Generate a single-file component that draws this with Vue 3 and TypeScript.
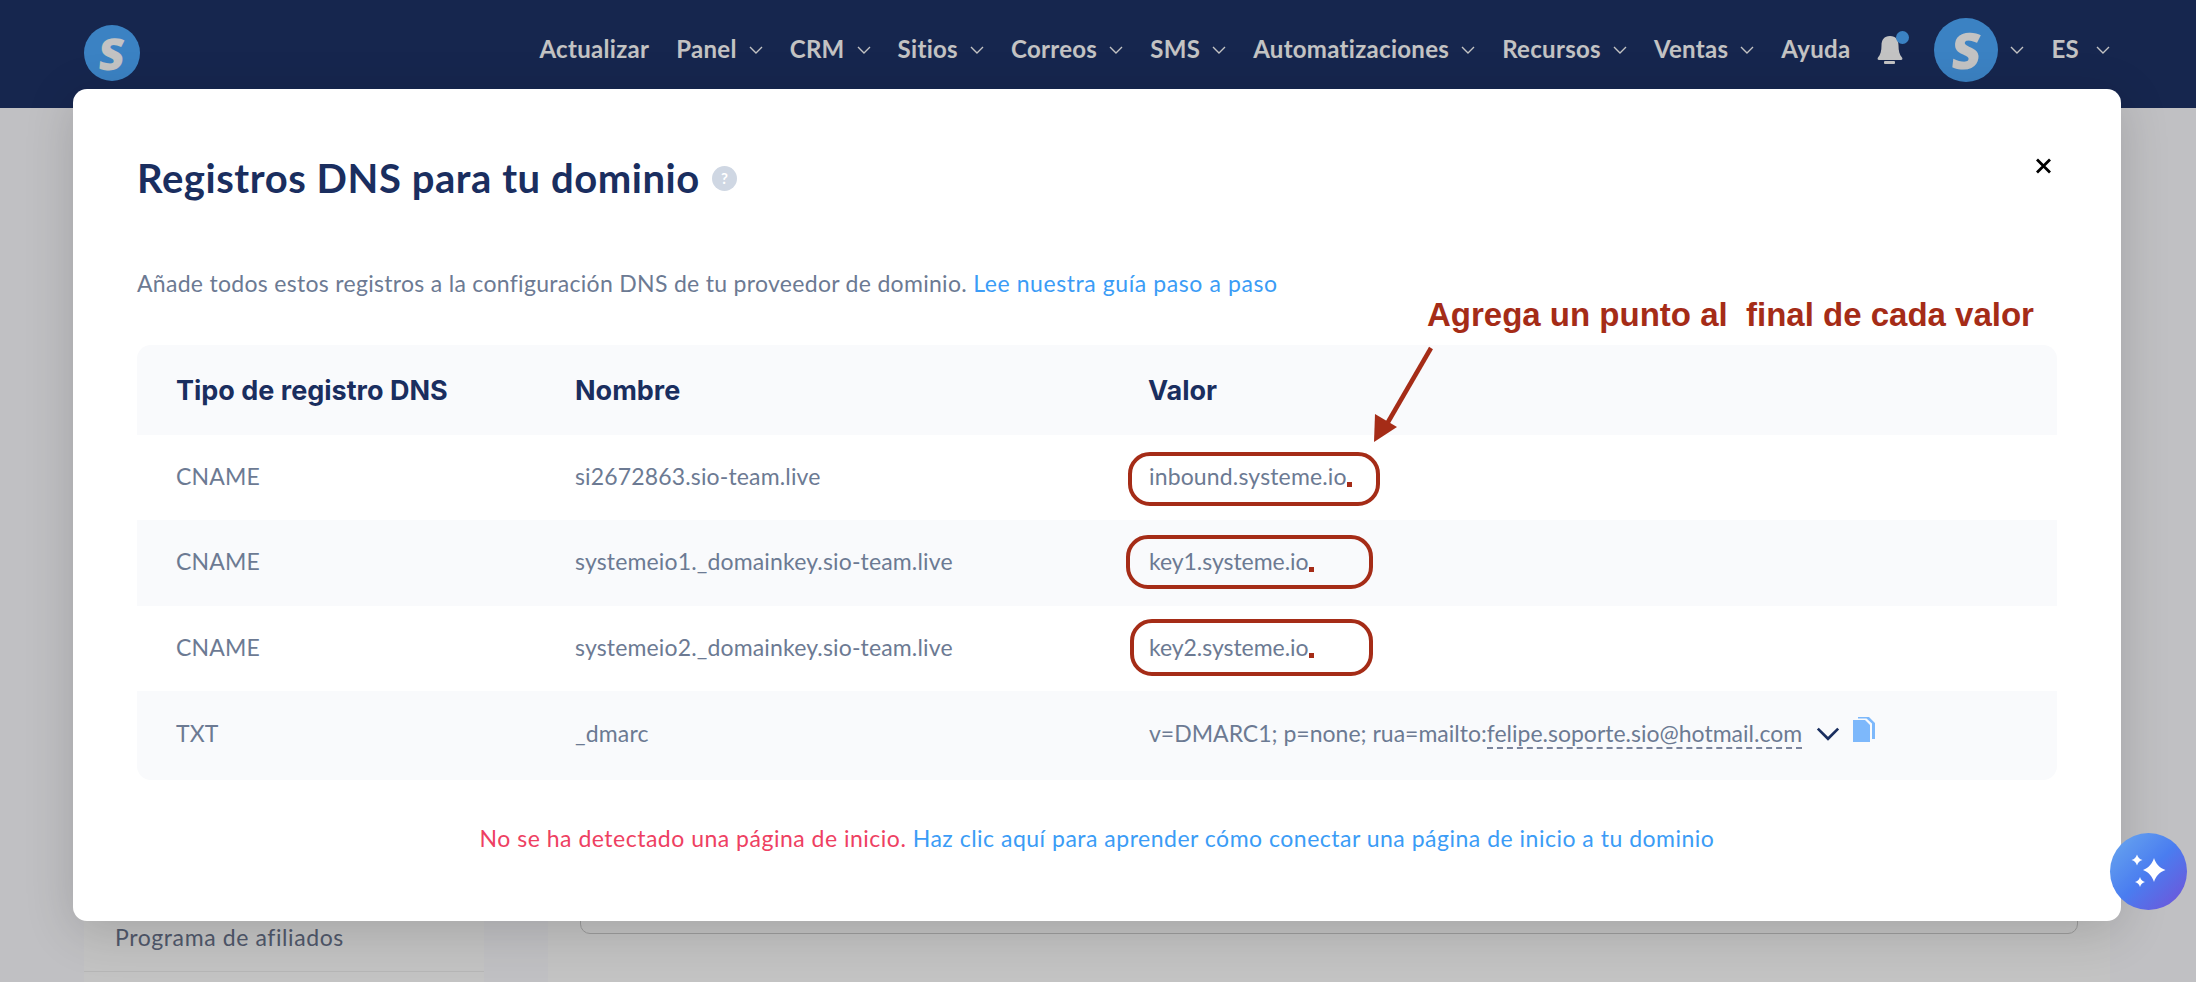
<script setup lang="ts">
// data
const navItems = [
  { label: 'Actualizar', caret: false },
  { label: 'Panel', caret: true },
  { label: 'CRM', caret: true },
  { label: 'Sitios', caret: true },
  { label: 'Correos', caret: true },
  { label: 'SMS', caret: true },
  { label: 'Automatizaciones', caret: true },
  { label: 'Recursos', caret: true },
  { label: 'Ventas', caret: true },
  { label: 'Ayuda', caret: false },
];

const records = [
  { type: 'CNAME', name: 'si2672863.sio-team.live', value: 'inbound.systeme.io', ring: 'ring-a' },
  { type: 'CNAME', name: 'systemeio1._domainkey.sio-team.live', value: 'key1.systeme.io', ring: 'ring-b' },
  { type: 'CNAME', name: 'systemeio2._domainkey.sio-team.live', value: 'key2.systeme.io', ring: 'ring-c' },
];

const noteText = 'Agrega un punto al  final de cada valor';
</script>

<template>
  <div class="page">
    <header class="navbar">
      <div class="logo"><span>S</span></div>
      <nav class="nav">
        <div v-for="item in navItems" :key="item.label" class="nav-item">
          <span>{{ item.label }}</span>
          <svg v-if="item.caret" class="caret" viewBox="0 0 14 8"><path d="M1 1l6 6 6-6" /></svg>
        </div>
        <div class="bell">
          <svg viewBox="0 0 32 34" width="32" height="34">
            <path d="M13 5c-6 0-8.500 4-8.500 9.500 0 5.500-1 9-3.500 12-.8 1 -.4 2.500 1 2.500h22c1.400 0 1.800-1.500 1-2.500-2.500-3-3.500-6.500-3.500-12C21.500 9 19 5 13 5z" fill="#fff" />
            <rect x="7" y="30" width="11" height="3" rx="1" fill="#fff" />
            <circle cx="25.500" cy="6.500" r="6.500" fill="#4eabff" />
          </svg>
        </div>
        <div class="avatar"><span>S</span></div>
        <svg class="caret avatar-caret" viewBox="0 0 14 8"><path d="M1 1l6 6 6-6" /></svg>
        <div class="nav-item lang">
          <span>ES</span>
          <svg class="caret" viewBox="0 0 14 8"><path d="M1 1l6 6 6-6" /></svg>
        </div>
      </nav>
    </header>

    <div class="content">
      <aside class="sidebar">
        <div class="side-link">Programa de afiliados</div>
      </aside>
      <main class="main">
        <div class="field"></div>
      </main>
    </div>

    <div class="backdrop"></div>

    <section class="modal">
      <div class="modal-head">
        <h1 class="title">Registros DNS para tu dominio</h1>
        <span class="help">?</span>
        <svg class="close" viewBox="0 0 17 16"><path d="M2 1.500l13 13M15 1.500l-13 13" /></svg>
      </div>
      <p class="desc">
        Añade todos estos registros a la configuración DNS de tu proveedor de dominio.
        <span class="link">Lee nuestra guía paso a paso</span>
      </p>

      <div class="table">
        <div class="row head">
          <div>Tipo de registro DNS</div>
          <div>Nombre</div>
          <div>Valor</div>
        </div>
        <div v-for="rec in records" :key="rec.name" class="row">
          <div>{{ rec.type }}</div>
          <div>{{ rec.name }}</div>
          <div class="value">
            <span class="value-text" :class="'text-' + rec.ring">{{ rec.value }}<i class="dot"></i><i class="ring" :class="rec.ring"></i></span>
          </div>
        </div>
        <div class="row txt">
          <div>TXT</div>
          <div>_dmarc</div>
          <div class="dmarc">
            <span>v=DMARC1; p=none; rua=mailto:<span class="dashed">felipe.soporte.sio@hotmail.com</span></span>
            <svg class="more" viewBox="0 0 22 14"><path d="M1.500 1.500L11 11l9.500-9.500" /></svg>
            <svg class="copy" viewBox="0 0 22 25" width="22" height="25">
              <path d="M5 0h11l6 6v16h-3V6.500L13.500 1.500H5z" fill="#7db8fb" />
              <path d="M0 3h12l5 5v17H0z" fill="#7db8fb" />
            </svg>
          </div>
        </div>
      </div>

      <p class="foot">
        <span class="warn">No se ha detectado una página de inicio.</span>
        {{ ' ' }}
        <span class="link">Haz clic aquí para aprender cómo conectar una página de inicio a tu dominio</span>
      </p>

      <div class="note">{{ noteText }}</div>
      <svg class="arrow" viewBox="0 0 70 100" width="70" height="100">
        <path d="M60 3L13 84" stroke="#a52c17" stroke-width="4.500" fill="none" />
        <path d="M3 97L4 69 26 82z" fill="#a52c17" />
      </svg>
    </section>

    <button class="assistant">
      <svg viewBox="0 0 77 77" width="77" height="77">
        <path d="M44 25c2 6 5 9.500 11.500 12C49 39.500 46 43 44 49c-2-6-5-9.500-11-12 6-2.500 9-6 11-12z" fill="#fff" />
        <path d="M27 21.500c1 3 2.300 4.500 5.500 5.500-3.200 1-4.500 2.500-5.500 5.500-1-3-2.300-4.500-5.500-5.500 3.200-1 4.500-2.500 5.500-5.500z" fill="#fff" />
        <path d="M30 44c1 3 2.200 4 5 5-2.800 1-4 2-5 5-1-3-2.200-4-5-5 2.800-1 4-2 5-5z" fill="#fff" />
      </svg>
    </button>
  </div>
</template>

<style>
html,
body {
  margin: 0;
  background: #fff;
}
</style>

<style scoped>
.page {
  position: relative;
  width: 2196px;
  height: 982px;
  overflow: hidden;
  background: #fbfcff;
  font-family: Lato, 'Noto Sans', sans-serif;
}

/* navbar */
.navbar {
  height: 108px;
  background: #1d3267;
  display: flex;
  align-items: center;
  justify-content: space-between;
  padding: 0 86px 0 84px;
}
.logo {
  width: 56px;
  height: 56px;
  margin-top: -2px;
  border-radius: 50%;
  background: #4eabff;
  display: flex;
  align-items: center;
  justify-content: center;
  color: #fff;
  font: 800 44px 'Open Sans', sans-serif;
}
.logo span,
.avatar span {
  display: block;
  transform: skewX(-6deg);
}
.nav {
  display: flex;
  align-items: center;
  margin-bottom: 12px;
  color: #fff;
  font-size: 24px;
  letter-spacing: 0.3px;
  font-weight: 700;
  gap: 27px;
}
.nav-item {
  display: flex;
  align-items: center;
  gap: 12px;
}
.lang {
  gap: 17px;
}
.caret {
  width: 14px;
  height: 8px;
  margin-top: 3px;
  fill: none;
  stroke: #fff;
  stroke-width: 1.400;
}
.bell {
  display: flex;
  width: 32px;
  height: 34px;
}
.avatar {
  width: 64px;
  height: 64px;
  margin: 4px 0 0 -2px;
  border-radius: 50%;
  background: #4eabff;
  display: flex;
  align-items: center;
  justify-content: center;
  font: 800 50px 'Open Sans', sans-serif;
}
.avatar-caret {
  margin-left: -15px;
}

/* page behind the modal */
.content {
  display: flex;
  height: 874px;
  padding-left: 84px;
  gap: 64px;
}
.sidebar {
  width: 400px;
  background: #fff;
  display: flex;
  flex-direction: column;
  justify-content: flex-end;
}
.side-link {
  padding: 5px 31px 4px;
  height: 50px;
  line-height: 40px;
  font-size: 23px;
  letter-spacing: 0.6px;
  color: #69738c;
  border-bottom: 1px solid #eee;
  margin-bottom: 10px;
}
.main {
  width: 1562px;
  background: #fff;
  padding: 0 32px;
  box-sizing: border-box;
}
.field {
  height: 824px;
  border: 1px solid #ccc;
  border-radius: 10px;
}
.backdrop {
  position: absolute;
  inset: 0;
  background: rgba(0, 0, 0, 0.235);
}

/* modal */
.modal {
  position: absolute;
  left: 73px;
  top: 89px;
  width: 2048px;
  height: 832px;
  box-sizing: border-box;
  padding: 0 64px;
  background: #fff;
  border-radius: 14px;
  box-shadow: 0 10px 50px rgba(0, 0, 0, 0.16);
}
.modal-head {
  position: relative;
  display: flex;
  align-items: center;
  gap: 12px;
  height: 178px;
}
.title {
  margin: 0;
  font-size: 40px;
  letter-spacing: 0.55px;
  font-weight: 700;
  color: #1a2e5f;
}
.help {
  width: 25px;
  height: 25px;
  border-radius: 50%;
  background: #cfd7e3;
  color: #fff;
  font-size: 15px;
  font-weight: 700;
  text-align: center;
  line-height: 25px;
}
.close {
  position: absolute;
  right: 5px;
  top: 69px;
  width: 17px;
  height: 16px;
  fill: none;
  stroke: #000;
  stroke-width: 2.800;
}
.desc {
  margin: 0;
  height: 78px;
  padding-top: 1px;
  box-sizing: border-box;
  line-height: 30px;
  font-size: 23px;
  letter-spacing: 0.3px;
  color: #6c7a93;
}
.desc .link {
  letter-spacing: 0.58px;
}
.link {
  color: #3b9cf6;
}

.table {
  width: 1920px;
  border-radius: 14px;
  overflow: hidden;
  font-size: 23px;
  letter-spacing: 0.15px;
  color: #6c7a93;
}
.row {
  display: grid;
  grid-template-columns: 399px 573px 1fr;
  align-items: center;
  box-sizing: border-box;
  height: 85.330px;
  padding: 0 0 3px 39px;
}
.row:nth-child(odd) {
  background: #f9fafc;
}
.row.head {
  height: 90px;
  padding-bottom: 0;
  font-family: Inter, sans-serif;
  font-size: 27px;
  letter-spacing: 0;
  font-weight: 700;
  color: #1a2e5f;
}
.row.txt {
  height: 89px;
  padding-bottom: 5px;
}
.value-text {
  position: relative;
  display: inline-block;
  margin-left: 1px;
}
.text-ring-b,
.text-ring-c {
  letter-spacing: -0.05px;
}
.dot {
  position: absolute;
  left: 100%;
  bottom: 3px;
  width: 5px;
  height: 5px;
  background: #a52c17;
}
.ring {
  position: absolute;
  box-sizing: border-box;
  border: 4.500px solid #a52c17;
  border-radius: 22px;
}
.ring-a {
  left: -21px;
  right: -33px;
  top: -10px;
  bottom: -16px;
}
.ring-b {
  left: -23px;
  right: -64px;
  top: -12.500px;
  bottom: -13.500px;
}
.ring-c {
  left: -19px;
  right: -64px;
  top: -14px;
  bottom: -15px;
}
.dmarc {
  display: flex;
  align-items: center;
  gap: 14px;
  margin-left: 1px;
  letter-spacing: 0;
}
.dashed {
  border-bottom: 2px dashed #7a849c;
}
.more {
  width: 24px;
  height: 15px;
  margin: 4px -1px 0 0;
  fill: none;
  stroke: #1a2e5f;
  stroke-width: 2.500;
}
.copy {
  margin-top: -7px;
}
.foot {
  margin: 43px 0 0;
  line-height: 30px;
  font-size: 23px;
  letter-spacing: 0.5px;
  text-align: center;
}
.warn {
  color: #ee4062;
}

/* annotation */
.note {
  position: absolute;
  left: 1354px;
  top: 207px;
  font: 700 33px 'Liberation Sans', Arial, sans-serif;
  color: #a52c17;
  white-space: pre;
}
.arrow {
  position: absolute;
  left: 1298px;
  top: 256px;
}

.assistant {
  position: absolute;
  left: 2110px;
  top: 833px;
  width: 77px;
  height: 77px;
  padding: 0;
  border: 0;
  border-radius: 50%;
  background: linear-gradient(135deg, #6ba9ee 0%, #4a7df0 50%, #7350d6 100%);
}
</style>
